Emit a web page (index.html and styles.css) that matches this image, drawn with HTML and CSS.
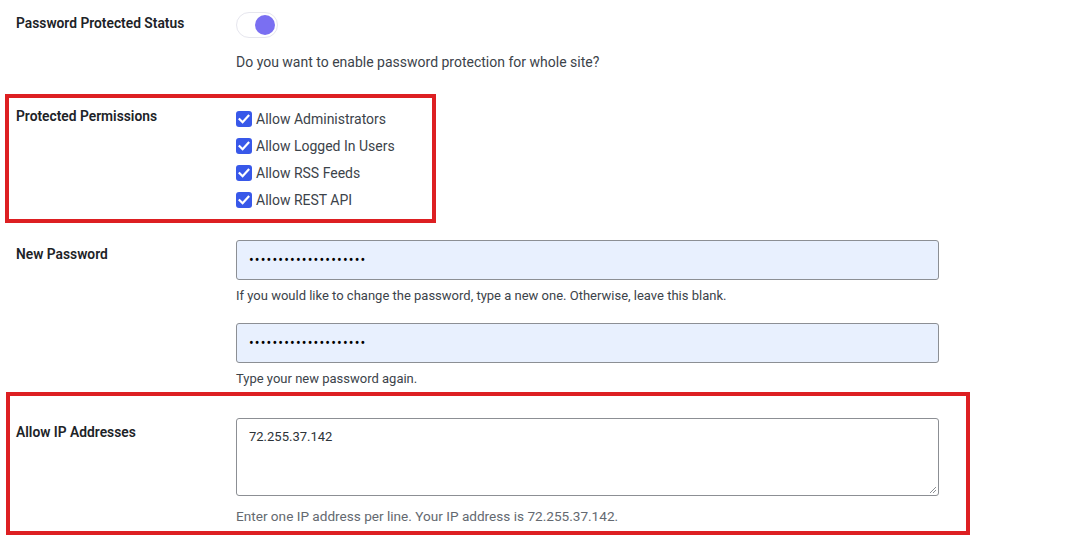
FILE: index.html
```html
<!DOCTYPE html>
<html lang="en">
<head>
<meta charset="utf-8">
<title>Password Protected Settings</title>
<link rel="stylesheet" href="styles.css">
</head>
<body>
<div class="form">
  <div class="row row-status">
    <div class="label">Password Protected Status</div>
    <div class="field">
      <span class="toggle"><span class="knob"></span></span>
      <p class="desc">Do you want to enable password protection for whole site?</p>
    </div>
  </div>

  <div class="row row-perms">
    <div class="label">Protected Permissions</div>
    <div class="field">
      <label class="check"><span class="box"><svg viewBox="0 0 16 16" width="16" height="16"><path d="M3.6 8.3 6.6 11.2 12.4 4.9" fill="none" stroke="#fff" stroke-width="2.2" stroke-linecap="square"/></svg></span>Allow Administrators</label>
      <label class="check"><span class="box"><svg viewBox="0 0 16 16" width="16" height="16"><path d="M3.6 8.3 6.6 11.2 12.4 4.9" fill="none" stroke="#fff" stroke-width="2.2" stroke-linecap="square"/></svg></span>Allow Logged In Users</label>
      <label class="check"><span class="box"><svg viewBox="0 0 16 16" width="16" height="16"><path d="M3.6 8.3 6.6 11.2 12.4 4.9" fill="none" stroke="#fff" stroke-width="2.2" stroke-linecap="square"/></svg></span>Allow RSS Feeds</label>
      <label class="check"><span class="box"><svg viewBox="0 0 16 16" width="16" height="16"><path d="M3.6 8.3 6.6 11.2 12.4 4.9" fill="none" stroke="#fff" stroke-width="2.2" stroke-linecap="square"/></svg></span>Allow REST API</label>
    </div>
  </div>

  <div class="row row-pass">
    <div class="label">New Password</div>
    <div class="field">
      <div class="input">••••••••••••••••••••</div>
      <p class="help help-first">If you would like to change the password, type a new one. Otherwise, leave this blank.</p>
      <div class="input input-second">••••••••••••••••••••</div>
      <p class="help help-second">Type your new password again.</p>
    </div>
  </div>

  <div class="row row-ip">
    <div class="label">Allow IP Addresses</div>
    <div class="field">
      <div class="textarea">72.255.37.142<svg class="grip" viewBox="0 0 10 10" width="10" height="10"><path d="M9 3 3 9M9 6 6 9" stroke="#8c8f94" stroke-width="1" fill="none"/></svg></div>
      <p class="help help-ip">Enter one IP address per line. Your IP address is 72.255.37.142.</p>
    </div>
  </div>

  <div class="mark mark-perms"></div>
  <div class="mark mark-ip"></div>
</div>
</body>
</html>
```

FILE: styles.css
```css
html, body {
  margin: 0;
  padding: 0;
  background: #fff;
}
body {
  font-family: Roboto, "Noto Sans", "Liberation Sans", sans-serif;
  color: #3c434a;
  font-size: 14px;
}
.form {
  position: relative;
  padding-left: 16px;
  height: 546px;
  box-sizing: border-box;
}
.row {
  display: grid;
  grid-template-columns: 220px 703px;
}
.label {
  font-weight: 600;
  font-size: 13.8px;
  line-height: 20px;
  color: #1d2327;
  margin-top: 4px;
}
.field {
  display: flex;
  flex-direction: column;
  align-items: flex-start;
}
.row-status { padding-top: 12px; }
.row-status .label { margin-top: 1px; }
.toggle {
  display: block;
  width: 42px;
  height: 26px;
  box-sizing: border-box;
  border: 1px solid #e6e6ee;
  border-radius: 13px;
  background: #fff;
  position: relative;
}
.knob {
  position: absolute;
  right: 2px;
  top: 2px;
  width: 20px;
  height: 20px;
  border-radius: 50%;
  background: #7a6ff2;
}
.desc {
  margin: 14px 0 0;
  line-height: 20px;
  font-size: 14px;
}
.row-perms { padding-top: 33px; }
.row-perms .label { margin-top: 1px; }
.check {
  display: flex;
  align-items: center;
  height: 27px;
  font-size: 14px;
}
.box {
  width: 16px;
  height: 16px;
  border-radius: 3px;
  background: #3858e9;
  margin-right: 4px;
  display: flex;
}
.row-pass { padding-top: 27px; }
.input {
  width: 703px;
  height: 40px;
  box-sizing: border-box;
  border: 1px solid #8c8f94;
  border-radius: 3px;
  background: #e8f0fe;
  padding-left: 12px;
  line-height: 38px;
  font-size: 14px;
  letter-spacing: 1.15px;
  color: #000;
}
.help {
  margin: 6px 0 0;
  font-size: 13px;
  line-height: 20px;
}
.input-second { margin-top: 17px; }
.row-ip { padding-top: 29px; }
.textarea {
  position: relative;
  width: 703px;
  height: 78px;
  box-sizing: border-box;
  border: 1px solid #8c8f94;
  border-radius: 3px;
  padding: 8px 12px;
  line-height: 20px;
  color: #2c3338;
  font-size: 13px;
}
.grip {
  position: absolute;
  right: 1px;
  bottom: 1px;
}
.help-ip {
  margin-top: 10px;
  font-size: 13.6px;
  color: #646970;
}
.mark {
  position: absolute;
  border: 4px solid #dd1f22;
  box-sizing: border-box;
}
.mark-perms {
  left: 5px;
  top: 94px;
  width: 431px;
  height: 129px;
}
.mark-ip {
  left: 6px;
  top: 392px;
  width: 964px;
  height: 143px;
}
```
